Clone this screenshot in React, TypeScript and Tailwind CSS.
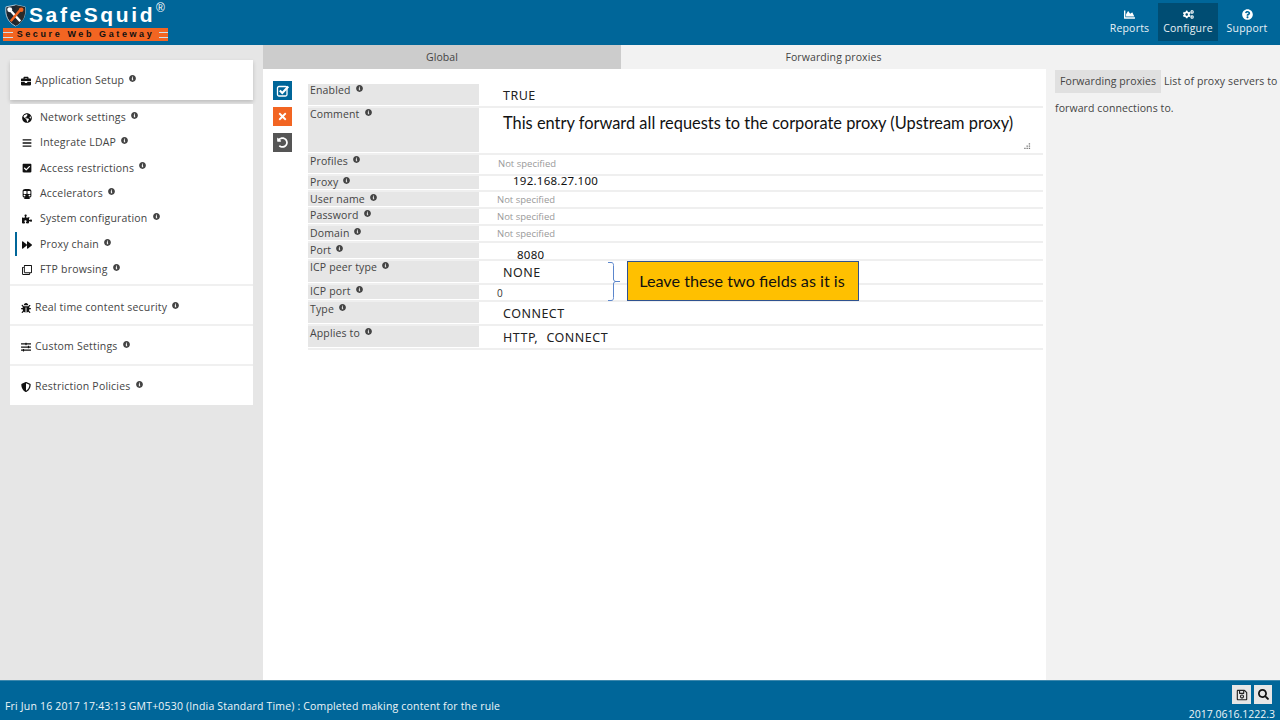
import type { ReactNode } from "react"
import {
  FaBars,
  FaBriefcase,
  FaBug,
  FaChartArea,
  FaCheckSquare,
  FaCogs,
  FaForward,
  FaGlobeAmericas,
  FaInfoCircle,
  FaPuzzlePiece,
  FaQuestionCircle,
  FaRegClone,
  FaRegSave,
  FaSearch,
  FaShieldAlt,
  FaSlidersH,
  FaSubway,
  FaTimes,
  FaUndoAlt,
} from "react-icons/fa"

const ui = "font-['Open_Sans','Noto_Sans',sans-serif]"

function Info({ className = "" }: { className?: string }) {
  return <FaInfoCircle className={`inline-block text-[7px] text-[#444] align-top ml-[5px] mt-[1px] ${className}`} />
}

function Logo() {
  return (
    <div className="relative w-[170px] h-[44px]">
      <svg viewBox="0 0 24 24" className="absolute left-[4px] top-[4px] w-[23px] h-[23px]">
        <path d="M2 3 L12 1 L22 3 C23 12 20 19 12 23 C4 19 1 12 2 3Z" fill="#1c2530" stroke="#dfe8ee" strokeWidth="0.8" />
        <path d="M12 1 L22 3 C23 12 20 19 12 23Z" fill="#2a2a2a" />
        <path d="M6 6 L17 18" stroke="#fff" strokeWidth="2.6" />
        <path d="M18 5 L7 18" stroke="#f26522" strokeWidth="2.6" />
        <circle cx="6" cy="6" r="2.6" fill="#fff" />
        <circle cx="18" cy="6" r="2.4" fill="#f26522" />
      </svg>
      <div className="absolute left-[29px] top-[1px] text-white font-['Liberation_Sans',sans-serif] font-bold text-[21px] leading-[28px] tracking-[2.6px] whitespace-nowrap">
        SafeSquid
      </div>
      <div className="absolute left-[156px] top-[1px] text-white font-['Liberation_Sans',sans-serif] text-[12px] leading-[14px]">®</div>
      <div className="absolute left-[3px] top-[28px] w-[165px] h-[13px] bg-[#f26522] flex items-center justify-center">
        <span className="text-[#111] font-['Liberation_Sans',sans-serif] font-bold text-[9px] tracking-[2.6px] whitespace-nowrap">
          Secure Web Gateway
        </span>
        <div className="absolute left-0 top-[4px] w-[10px] h-[1px] bg-[#cfe0ea]" />
        <div className="absolute left-0 top-[9px] w-[10px] h-[1px] bg-[#cfe0ea]" />
        <div className="absolute right-0 top-[4px] w-[9px] h-[1px] bg-[#cfe0ea]" />
        <div className="absolute right-0 top-[9px] w-[9px] h-[1px] bg-[#cfe0ea]" />
      </div>
    </div>
  )
}

function TopButton({ icon, label, className = "" }: { icon: ReactNode; label: string; className?: string }) {
  return (
    <div className={`w-[60px] h-[38px] mt-[3px] flex flex-col items-center pt-[5px] ${className}`}>
      <div className="h-[12px] text-[11px] text-white flex items-center">{icon}</div>
      <div className="text-[10.5px] leading-[14px] mt-[1px] text-[#e8f1f6] tracking-[0.2px]">{label}</div>
    </div>
  )
}

function SectionRow({ icon, label, className }: { icon: ReactNode; label: string; className: string }) {
  return (
    <div className={`bg-white flex items-center pl-[11px] text-[10.5px] text-[#444] tracking-[0.2px] ${className}`}>
      <span className="w-[14px] text-[10px] text-[#111]">{icon}</span>
      <span>{label}</span>
      <Info className="mb-[6px]" />
    </div>
  )
}

const subItems: { icon: ReactNode; label: string; active?: boolean }[] = [
  { icon: <FaGlobeAmericas />, label: "Network settings" },
  { icon: <FaBars />, label: "Integrate LDAP" },
  { icon: <FaCheckSquare />, label: "Access restrictions" },
  { icon: <FaSubway />, label: "Accelerators" },
  { icon: <FaPuzzlePiece />, label: "System configuration" },
  { icon: <FaForward />, label: "Proxy chain", active: true },
  { icon: <FaRegClone />, label: "FTP browsing" },
]

function Sidebar() {
  return (
    <aside className="w-[263px] shrink-0 bg-[#e6e6e6] pt-[15px] pl-[10px] pr-[10px]">
      <SectionRow icon={<FaBriefcase />} label="Application Setup" className="h-[40px] pt-[1px] shadow-[0_2px_4px_rgba(0,0,0,0.18)]" />
      <div className="bg-white mt-[4px] pt-[1px] h-[182px] border-b-2 border-[#f0f0f0]">
        {subItems.map((item) => (
          <div key={item.label} className="relative h-[25.4px] flex items-center pl-[12px] text-[10.5px] text-[#444] tracking-[0.2px]">
            {item.active && <div className="absolute left-[5px] top-0 h-[24px] w-[2px] bg-[#006699]" />}
            <span className="w-[18px] text-[10px] text-[#111]">{item.icon}</span>
            <span>{item.label}</span>
            <Info className="mb-[6px]" />
          </div>
        ))}
      </div>
      <SectionRow icon={<FaBug />} label="Real time content security" className="h-[40px] pt-[5px] border-b-2 border-[#f0f0f0]" />
      <SectionRow icon={<FaSlidersH />} label="Custom Settings" className="h-[40px] pt-[4px] border-b-2 border-[#f0f0f0]" />
      <SectionRow icon={<FaShieldAlt />} label="Restriction Policies" className="h-[39px] pt-[2px]" />
    </aside>
  )
}

type Row = { label: string; rowClass: string; labelClass?: string; value: ReactNode }

const muted = (pl: string) => <span className={`text-[9.5px] text-[#9a9a9a] ${pl}`}>Not specified</span>
const big = (text: string) => (
  <span className="pl-[24px] pt-[2px] text-[12.5px] text-[#222] tracking-[0.5px] whitespace-pre [word-spacing:-1px] font-['Noto_Sans',sans-serif]">{text}</span>
)

const rows: Row[] = [
  { label: "Enabled", rowClass: "h-[24px]", value: big("TRUE") },
  {
    label: "Comment",
    rowClass: "h-[47px]",
    value: (
      <div className="relative h-full w-full">
        <span className="absolute left-[24px] top-[5px] text-[16.4px] leading-[20px] text-[#111] font-['Lato',sans-serif] whitespace-nowrap">
          This entry forward all requests to the corporate proxy (Upstream proxy)
        </span>
        <svg viewBox="0 0 8 8" className="absolute right-[12px] bottom-[2px] w-[9px] h-[9px]">
          <path d="M6 1h1.200v1.200H6zM4 3h1.200v1.200H4zM6 3h1.200v1.200H6zM2 5h1.200v1.200H2zM4 5h1.200v1.200H4zM6 5h1.200v1.200H6z" fill="#777" />
        </svg>
      </div>
    ),
  },
  { label: "Profiles", rowClass: "h-[21px]", value: muted("pl-[19px]") },
  {
    label: "Proxy",
    rowClass: "h-[16px]",
    value: <span className="pl-[34px] pb-[5px] text-[11.5px] text-[#111] tracking-[0.25px] font-['Noto_Sans',sans-serif]">192.168.27.100</span>,
  },
  { label: "User name", rowClass: "h-[17px]", labelClass: "pt-[1px]", value: muted("pl-[18px] pt-[2px]") },
  { label: "Password", rowClass: "h-[17px]", value: muted("pl-[18px] pt-[2px]") },
  { label: "Domain", rowClass: "h-[17px]", labelClass: "pt-[1px]", value: muted("pl-[18px] pt-[2px]") },
  {
    label: "Port",
    rowClass: "h-[18px]",
    labelClass: "pt-[1px]",
    value: <span className="pl-[38px] pt-[8px] text-[11.5px] text-[#111] tracking-[0.25px] font-['Noto_Sans',sans-serif]">8080</span>,
  },
  { label: "ICP peer type", rowClass: "h-[24px]", value: big("NONE") },
  {
    label: "ICP port",
    rowClass: "h-[17px]",
    value: <span className="pl-[18px] pt-[2px] text-[10px] text-[#333]">0</span>,
  },
  { label: "Type", rowClass: "h-[24px]", labelClass: "pt-[1px]", value: big("CONNECT") },
  { label: "Applies to", rowClass: "h-[24px]", labelClass: "pt-[1px]", value: big("HTTP,   CONNECT") },
]

function RuleForm() {
  return (
    <div className="relative flex-1 bg-white flex pt-[15px] pl-[10px]">
      <div className="w-[20px] shrink-0 flex flex-col gap-[7px]">
        <div className="w-[19px] h-[19px] -mt-[3px] bg-[#006699] text-white flex items-center justify-center">
          <svg viewBox="0 0 14 14" className="w-[14px] h-[14px]" fill="none" stroke="#fff">
            <rect x="1.500" y="2.500" width="9.500" height="9.500" rx="1.500" strokeWidth="1.300" />
            <path d="M3.800 6.500l2.500 2.500 6-6.500" strokeWidth="2.200" />
          </svg>
        </div>
        <div className="w-[19px] h-[19px] bg-[#f26522] text-white flex items-center justify-center text-[11px]">
          <FaTimes />
        </div>
        <div className="w-[19px] h-[19px] bg-[#555] text-white flex items-center justify-center text-[11px]">
          <FaUndoAlt />
        </div>
      </div>
      <div className="ml-[15px] w-[735px]">
        {rows.map((row) => (
          <div key={row.label} className={`flex border-b-2 border-[#efefef] ${row.rowClass}`}>
            <div className={`w-[171px] shrink-0 mb-[1px] bg-[#e6e6e6] pl-[2px] text-[10.5px] leading-[13px] text-[#444] tracking-[0.15px] whitespace-nowrap overflow-hidden ${row.labelClass ?? ""}`}>
              {row.label}
              <Info className="ml-[4px]" />
            </div>
            <div className="flex-1 flex items-center min-w-0">{row.value}</div>
          </div>
        ))}
      </div>
      {/* annotation drawn on the screenshot */}
      <svg viewBox="0 0 14 39" className="absolute left-[345px] top-[193px] w-[14px] h-[39px]" fill="none">
        <path d="M0 .5h3c2 0 2.500 1 2.500 3V17c0 1.500 1 2.500 2.500 2.500h4M8 19.500c-1.500 0-2.500 1-2.500 2.500v13.500c0 2-.5 3-2.500 3H0" stroke="#5b86cc" />
      </svg>
      <div className="absolute left-[364px] top-[192px] w-[232px] h-[40px] bg-[#ffc000] border border-[#2f528f] flex items-center justify-center pr-[2px] text-[16.2px] text-[#111] font-['Lato',sans-serif] whitespace-nowrap">
        Leave these two fields as it is
      </div>
    </div>
  )
}

export default function App() {
  return (
    <div className={`h-[720px] w-[1280px] overflow-hidden flex flex-col ${ui}`}>
      <header className="h-[45px] shrink-0 bg-[#006699] flex justify-between pr-[2px]">
        <Logo />
        <div className="flex">
          <TopButton icon={<FaChartArea />} label="Reports" className="pl-[3px]" />
          <TopButton icon={<FaCogs />} label="Configure" className="bg-[#004d73]" />
          <TopButton icon={<FaQuestionCircle />} label="Support" className="pr-[2px]" />
        </div>
      </header>
      <div className="flex-1 min-h-0 flex">
        <Sidebar />
        <div className="flex-1 flex flex-col min-w-0">
          <div className="h-[24px] shrink-0 flex text-[10.5px] text-[#444] tracking-[0.1px]">
            <div className="w-[358px] bg-[#cccccc] flex items-center justify-center pt-[1px]">Global</div>
            <div className="flex-1 bg-[#f2f2f2] flex items-center justify-center pt-[1px] pr-[234px]">Forwarding proxies</div>
          </div>
          <div className="flex-1 min-h-0 flex">
            <RuleForm />
            <div className="w-[234px] shrink-0 bg-[#f2f2f2] pl-[9px] text-[10.5px] leading-[27px] text-[#444] tracking-[0.1px]">
              <div className="-mt-[1px]">
                <span className="inline-block bg-[#e0e0e0] px-[5px] h-[23px] leading-[23px]">Forwarding proxies</span>{" "}
                List of proxy servers to forward connections to.
              </div>
            </div>
          </div>
        </div>
      </div>
      <footer className="relative h-[40px] shrink-0 bg-[#006699] border-t border-[#3d88ad] text-white">
        <div className="absolute left-[5px] top-[18px] text-[10.5px] leading-[14px] tracking-[0.18px] text-[#eef5f8]">
          Fri Jun 16 2017 17:43:13 GMT+0530 (India Standard Time) : Completed making content for the rule
        </div>
        <div className="absolute right-[8px] top-[4px] flex gap-[3px]">
          <div className="w-[19px] h-[19px] bg-[#e6e6e6] text-[#222] flex items-center justify-center text-[12px]">
            <FaRegSave />
          </div>
          <div className="w-[18px] h-[19px] bg-[#e6e6e6] text-[#111] flex items-center justify-center text-[11px]">
            <FaSearch />
          </div>
        </div>
        <div className="absolute right-[5px] top-[28px] text-[10.5px] leading-[11px] text-[#eef5f8]">
          2017.0616.1222.3
        </div>
      </footer>
    </div>
  )
}
